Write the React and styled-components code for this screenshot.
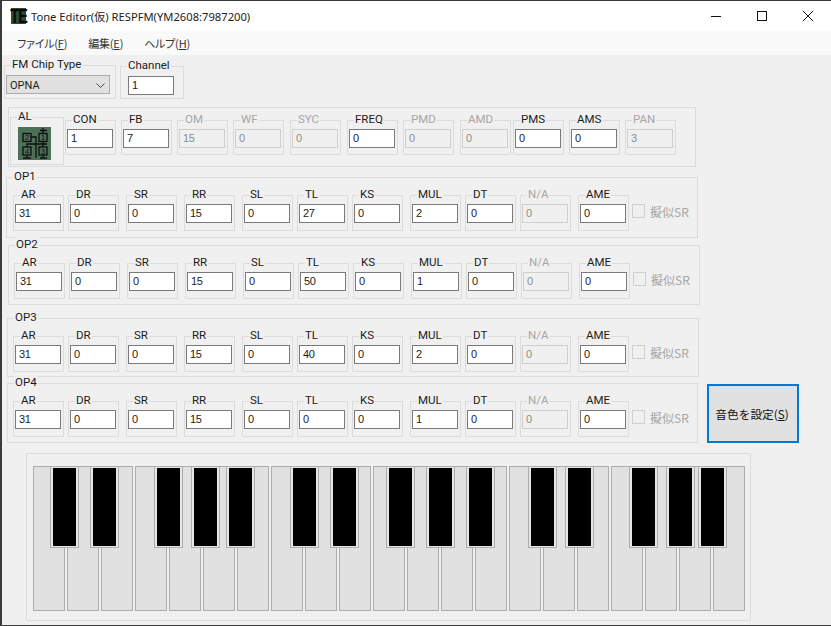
import styled, { createGlobalStyle } from "styled-components";

const GlobalStyle = createGlobalStyle`
  html, body {
    margin: 0;
    padding: 0;
    background: #f0f0f0;
  }
`;

const UI_FONT = `Roboto, "Noto Sans CJK JP", sans-serif`;
const JP_FONT = `"Noto Sans CJK JP", "Liberation Sans", sans-serif`;

const Window = styled.div`
  width: 831px;
  height: 626px;
  box-sizing: border-box;
  overflow: hidden;
  background: #f0f0f0;
  border-top: 1px solid #3a3a3a;
  border-bottom: 1px solid #3a3a3a;
  border-left: 2px solid #3a3a3a;
  font-family: ${UI_FONT};
  font-size: 11.5px;
  color: #1c1c1c;
`;
const TitleBar = styled.div`
  height: 30px;
  background: #fff;
  display: flex;
  align-items: center;
  padding-left: 9px;
`;
const Logo = styled.div`
  flex: none;
  width: 15px;
  height: 16px;
  background: #2f4a37;
  display: flex;
  align-items: center;
  justify-content: center;
`;
const LogoText = styled.span`
  flex: none;
  font-family: "Liberation Sans", sans-serif;
  font-weight: 700;
  font-size: 20px;
  line-height: 16px;
  letter-spacing: -1px;
  color: #060a07;
  transform: scaleX(0.72);
`;
const Title = styled.div`
  margin: 0 0 1px 5px;
  font-family: "Noto Sans", "Noto Sans CJK JP", sans-serif;
  font-size: 11.2px;
  color: #222;
  white-space: nowrap;
`;
const Controls = styled.div`
  margin-left: auto;
  display: flex;
`;
const Control = styled.div`
  width: 46px;
  height: 30px;
  display: flex;
  align-items: center;
  justify-content: center;
  svg {
    display: block;
  }
`;
const MenuBar = styled.div`
  height: 24px;
  background: #f9f9f9;
  display: flex;
  align-items: center;
  padding-left: 15px;
  gap: 21px;
  font-family: ${JP_FONT};
  font-size: 11px;
  letter-spacing: -0.2px;
  font-feature-settings: "palt";
  color: #333;
`;
const Content = styled.div`
  display: flex;
  flex-direction: column;
  align-items: flex-start;
`;
const Row = styled.div`
  display: flex;
  align-items: flex-start;
  margin: ${(p) => p.$mt || 0}px 0 0 ${(p) => p.$ml || 0}px;
`;
const Group = styled.div`
  position: relative;
  box-sizing: border-box;
  flex: none;
  border: 1px solid #dcdcdc;
  width: ${(p) => p.$w}px;
  height: ${(p) => p.$h}px;
  margin-left: ${(p) => p.$ml || 0}px;
  margin-top: ${(p) => p.$mt || 0}px;
  padding: ${(p) => p.$pad || "8px 0 0 1px"};
`;
const GroupLabel = styled.div`
  position: absolute;
  top: -9px;
  left: 6px;
  padding: 0 1px;
  background: #f0f0f0;
  line-height: 14px;
  white-space: nowrap;
  color: ${(p) => (p.$off ? "#a6a6a6" : "#1c1c1c")};
`;
const Combo = styled.div`
  box-sizing: border-box;
  width: 104px;
  height: 19px;
  background: #e1e1e1;
  border: 1px solid #adadad;
  display: flex;
  align-items: center;
  justify-content: space-between;
  padding: 1px 4px 0 3px;
  font-size: 11px;
`;
const NumberBox = styled.input`
  display: block;
  box-sizing: border-box;
  width: 46px;
  height: 19px;
  margin: 0;
  padding: 0 0 1px 3px;
  background: #fff;
  border: 1px solid #7a7a7a;
  border-radius: 0;
  outline: none;
  font-family: "Liberation Sans", sans-serif;
  font-size: 11px;
  letter-spacing: -0.4px;
  color: #1c1c1c;
  &:disabled {
    background: #f0f0f0;
    border-color: #cfcfcf;
    color: #8c8c8c;
  }
`;
const ToneGroup = styled(Group)`
  display: flex;
  align-items: flex-start;
`;
const FieldRow = styled.div`
  display: flex;
  align-items: center;
`;
const CheckWrap = styled.div`
  display: flex;
  align-items: center;
  gap: 5px;
  margin: 0 0 4px 3px;
  color: #a6a6a6;
  font-family: ${JP_FONT};
  font-size: 12px;
  white-space: nowrap;
`;
const CheckBox = styled.span`
  display: block;
  box-sizing: border-box;
  width: 13px;
  height: 14px;
  border: 1px solid #cfcfcf;
`;
const SetButton = styled.button`
  box-sizing: border-box;
  flex: none;
  width: 92px;
  height: 59px;
  margin: 1px 0 0 9px;
  padding: 0 2px 1px 0;
  background: #e1e1e1;
  border: 2px solid #0078d7;
  border-radius: 0;
  font-family: ${JP_FONT};
  font-size: 11.7px;
  color: #111;
`;
const WhiteKeys = styled.div`
  display: flex;
  gap: 2px;
`;
const WhiteKey = styled.div`
  box-sizing: border-box;
  width: 32px;
  height: 145px;
  background: #e1e1e1;
  border: 1px solid #adadad;
`;
const BlackKey = styled.div`
  position: absolute;
  top: 12px;
  left: ${(p) => p.$left}px;
  box-sizing: border-box;
  width: 29px;
  height: 82px;
  padding: 1px 2px;
  background: #e6e6e6;
  border: 1px solid #adadad;
  &::before {
    content: "";
    display: block;
    height: 100%;
    background: #000;
  }
`;
const IconSvg = styled.svg`
  display: block;
`;

const TONE_PARAMS = [
  { label: "CON", value: "1", ml: 1 },
  { label: "FB", value: "7", ml: 5 },
  { label: "OM", value: "15", ml: 5, off: true },
  { label: "WF", value: "0", ml: 5, off: true },
  { label: "SYC", value: "0", ml: 6, off: true },
  { label: "FREQ", value: "0", ml: 6 },
  { label: "PMD", value: "0", ml: 5, off: true },
  { label: "AMD", value: "0", ml: 6, off: true },
  { label: "PMS", value: "0", ml: 2 },
  { label: "AMS", value: "0", ml: 5 },
  { label: "PAN", value: "3", ml: 5, off: true },
];

const OP_FIELDS = [
  { label: "AR", ml: 0 },
  { label: "DR", ml: 4 },
  { label: "SR", ml: 7 },
  { label: "RR", ml: 7 },
  { label: "SL", ml: 7 },
  { label: "TL", ml: 4 },
  { label: "KS", ml: 4 },
  { label: "MUL", ml: 7 },
  { label: "DT", ml: 4 },
  { label: "N/A", ml: 4, off: true },
  { label: "AME", ml: 7 },
];

const OPERATORS = [
  { name: "OP1", values: [31, 0, 0, 15, 0, 27, 0, 2, 0, 0, 0], left: 4, w: 692, h: 61, top: 10, pad: 6 },
  { name: "OP2", values: [31, 0, 0, 15, 0, 50, 0, 1, 0, 0, 0], left: 6, w: 692, h: 60, top: 7, pad: 5 },
  { name: "OP3", values: [31, 0, 0, 15, 0, 40, 0, 2, 0, 0, 0], left: 5, w: 692, h: 59, top: 13, pad: 5 },
  { name: "OP4", values: [31, 0, 0, 15, 0, 0, 0, 1, 0, 0, 0], left: 5, w: 691, h: 60, top: 6, pad: 5 },
];

const BLACK_KEYS = [50, 90, 154, 191, 226, 290, 330, 386, 426, 466, 528, 565, 629, 666, 698];

function Param({ label, value, off, ml, h = 35 }) {
  return (
    <Group $w={51} $h={h} $ml={ml} $mt={h === 35 ? 3 : 0}>
      <GroupLabel $off={off}>{label}</GroupLabel>
      <NumberBox readOnly disabled={off} value={value} />
    </Group>
  );
}

function AlgorithmIcon() {
  return (
    <IconSvg width="33" height="33" viewBox="0 0 33 33">
      <rect width="33" height="33" fill="#4f7058" />
      <g fill="none" stroke="#0b0f0b" strokeWidth="1.3">
        <rect x="5" y="6.5" width="8" height="8" />
        <rect x="21" y="6.5" width="8" height="8" />
        <rect x="5" y="20" width="8" height="8" />
        <rect x="21" y="20" width="8" height="8" />
        <path d="M22 3.5h7M25 1v5.5M25 14.5v5.5M13 10h5v7M9 20v-3h20M25 28v3M9 28v3M5 31h8M22 31h7M18 17v14" />
      </g>
      <g fill="#0b0f0b" fontFamily="Liberation Sans" fontSize="7.5" textAnchor="middle">
        <text x="9" y="13">2</text>
        <text x="25" y="13">1</text>
        <text x="9" y="26.5">4</text>
        <text x="25" y="26.5">3</text>
      </g>
    </IconSvg>
  );
}

function Operator({ op }) {
  return (
    <Group $w={op.w} $h={op.h} $pad={`17px 0 0 ${op.pad}px`}>
      <GroupLabel>{op.name}</GroupLabel>
      <FieldRow>
        {OP_FIELDS.map((f, i) => (
          <Param key={f.label} label={f.label} off={f.off} ml={f.ml} value={op.values[i]} h={36} />
        ))}
        <CheckWrap>
          <CheckBox />
          擬似SR
        </CheckWrap>
      </FieldRow>
    </Group>
  );
}

export default function App() {
  return (
    <Window>
      <GlobalStyle />
      <TitleBar>
        <Logo>
          <LogoText>TE</LogoText>
        </Logo>
        <Title>Tone Editor(仮) RESPFM(YM2608:7987200)</Title>
        <Controls>
          <Control>
            <IconSvg width="10" height="10" viewBox="0 0 10 10">
              <path d="M0 5.5h10" stroke="#111" fill="none" />
            </IconSvg>
          </Control>
          <Control>
            <IconSvg width="10" height="10" viewBox="0 0 10 10">
              <rect x=".5" y=".5" width="9" height="9" stroke="#111" fill="none" />
            </IconSvg>
          </Control>
          <Control>
            <IconSvg width="10" height="10" viewBox="0 0 10 10">
              <path d="M0 0l10 10M10 0L0 10" stroke="#111" fill="none" />
            </IconSvg>
          </Control>
        </Controls>
      </TitleBar>
      <MenuBar>
        <span>ファイル(<u>F</u>)</span>
        <span>編集(<u>E</u>)</span>
        <span>ヘルプ(<u>H</u>)</span>
      </MenuBar>
      <Content>
        <Row $mt={10} $ml={2}>
          <Group $w={112} $h={34} $pad="9px 0 0 1px">
            <GroupLabel>FM Chip Type</GroupLabel>
            <Combo>
              OPNA
              <svg width="9" height="5" viewBox="0 0 9 5">
                <path d="M.5.5l4 4 4-4" stroke="#444" fill="none" />
              </svg>
            </Combo>
          </Group>
          <Group $w={64} $h={33} $ml={4} $mt={1} $pad="9px 0 0 7px">
            <GroupLabel>Channel</GroupLabel>
            <NumberBox readOnly value="1" />
          </Group>
        </Row>
        <Row $mt={8} $ml={6}>
          <ToneGroup $w={688} $h={60} $pad="9px 0 0 1px">
            <Group $w={54} $h={48} $pad="9px 0 0 7px">
              <GroupLabel>AL</GroupLabel>
              <AlgorithmIcon />
            </Group>
            {TONE_PARAMS.map((p) => (
              <Param key={p.label} {...p} />
            ))}
          </ToneGroup>
        </Row>
        {OPERATORS.map((op) => (
          <Row key={op.name} $ml={op.left} $mt={op.top}>
            <Operator op={op} />
            {op.name === "OP4" && (
              <SetButton>
                音色を設定(<u>S</u>)
              </SetButton>
            )}
          </Row>
        ))}
        <Row $mt={10} $ml={24}>
          <Group $w={725} $h={168} $pad="12px 0 0 6px">
            <WhiteKeys>
              {Array.from({ length: 21 }, (_, i) => (
                <WhiteKey key={i} />
              ))}
            </WhiteKeys>
            {BLACK_KEYS.map((x) => (
              <BlackKey key={x} $left={x - 27} />
            ))}
          </Group>
        </Row>
      </Content>
    </Window>
  );
}
